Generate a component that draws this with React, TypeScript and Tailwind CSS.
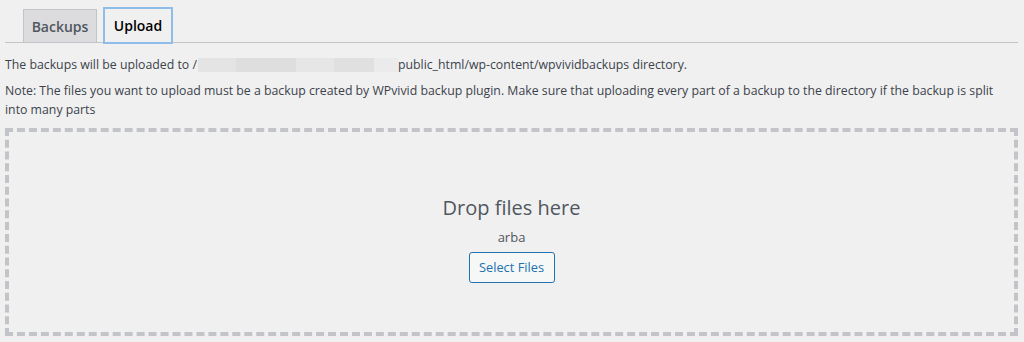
export default function App() {
  return (
    <div
      className="w-full h-[342px] bg-[#f0f0f1] pl-[5px] pr-[6px] overflow-hidden text-[#3c434a]"
      style={{ fontFamily: '"Open Sans", "Noto Sans", Arial, sans-serif' }}
    >
      {/* Tabs */}
      <div className="flex items-end h-[43px] border-b border-[#c3c4c7] pl-[18px] gap-[6px]">
        <div className="w-[74px] h-[34px] -mb-px flex items-center justify-center bg-[#dcdcde] border border-[#c3c4c7] text-[14px] font-semibold text-[#50575e]">
          Backups
        </div>
        <div className="w-[70px] h-[37px] -mb-[2px] flex items-center justify-center bg-[#f0f0f1] border-2 border-[#8fbde9] text-[14px] font-semibold text-[#000]">
          Upload
        </div>
      </div>

      {/* Info text */}
      <p className="mt-[12px] text-[12.3px] leading-[19px] flex items-center">
        The backups will be uploaded to /
        <span className="inline-flex h-[14px] w-[200px] ml-[1px]">
          <span className="flex-1 bg-[#e4e4e5]" />
          <span className="w-[60px] bg-[#dedede]" />
          <span className="flex-1 bg-[#e6e6e7]" />
          <span className="w-[40px] bg-[#e0e0e1]" />
          <span className="w-[24px] bg-[#ebebec]" />
        </span>
        public_html/wp-content/wpvividbackups directory.
      </p>
      <p className="mt-[7px] text-[12.3px] leading-[19px] pr-[4px]">
        Note: The files you want to upload must be a backup created by WPvivid backup plugin. Make sure that uploading every part of a backup to the directory if the backup is split into many parts
      </p>

      {/* Drop area */}
      <div className="mt-[9px] h-[208px] border-4 border-dashed border-[#c3c4c7] flex flex-col items-center pt-[62px]">
        <p className="text-[20px] leading-[28px] text-[#50575e]">Drop files here</p>
        <p className="text-[13px] leading-[18px] text-[#50575e] mt-[6px]">arba</p>
        <button className="mt-[6px] h-[31px] w-[86px] text-[12.8px] text-[#2271b1] bg-[#f6f7f7] border border-[#2271b1] rounded-[3px]">
          Select Files
        </button>
      </div>
    </div>
  )
}
